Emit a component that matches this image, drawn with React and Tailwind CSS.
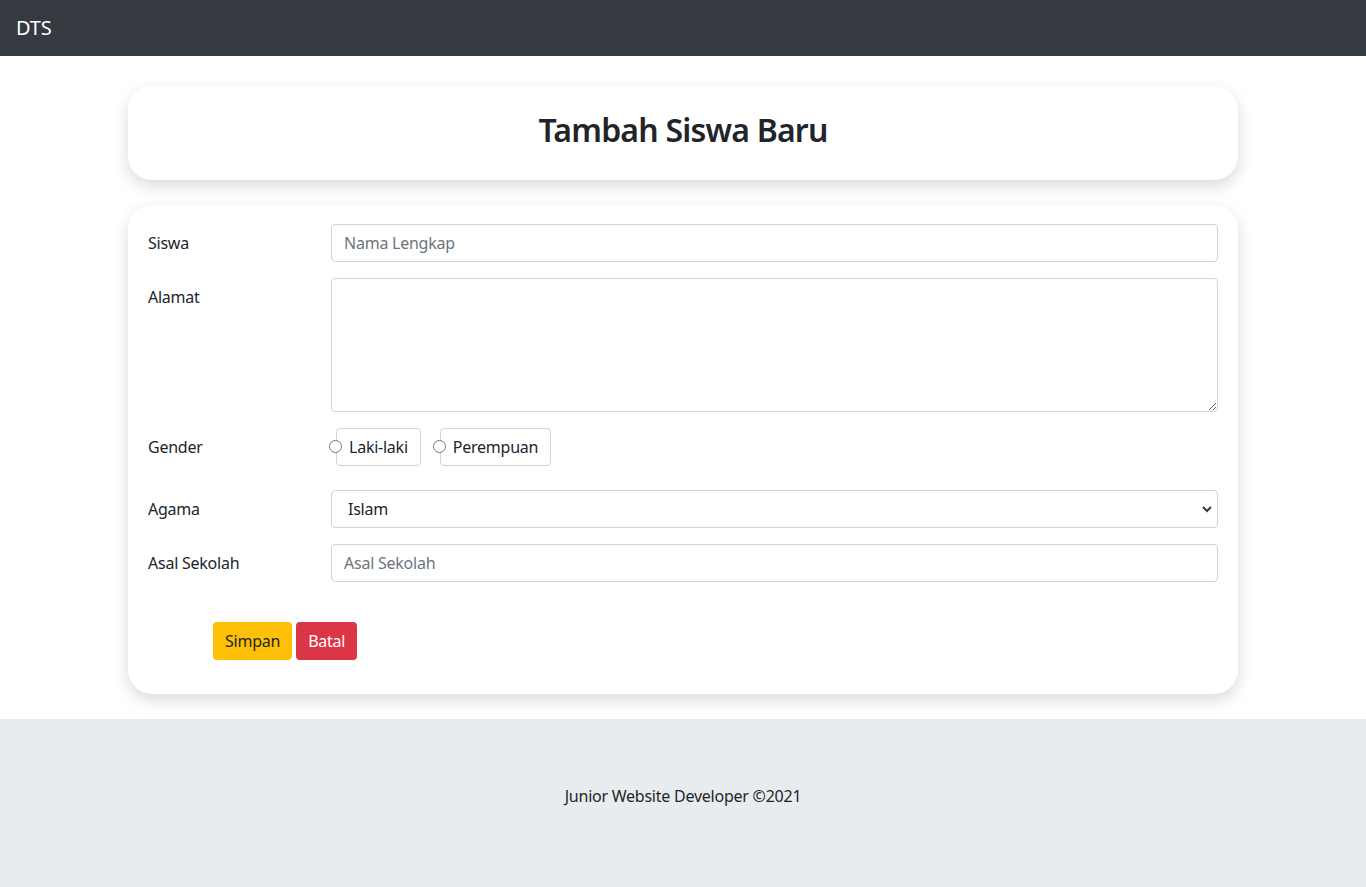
import React from 'react';

const inputCls =
    'w-full h-[38px] rounded-[4px] border border-[#ced4da] bg-white px-3 text-[16px] text-[#212529] placeholder:text-[#6c757d] outline-none';

const App = () => {
    return (
        <div className="min-h-screen flex flex-col bg-white text-[#212529] font-['Noto_Sans',sans-serif] text-[16px] tracking-[-0.015em]">
            {/* Navbar */}
            <nav className="h-14 bg-[#343a40] flex items-center px-4">
                <span className="text-white text-[20px]">DTS</span>
            </nav>

            <main className="w-[1110px] mx-auto pt-[30px] pb-[25px] flex flex-col gap-[25px]">
                {/* Header card */}
                <div className="h-[94px] rounded-[24px] bg-white shadow-[0_6px_16px_rgba(0,0,0,0.15)] flex items-center justify-center">
                    <h1 className="text-[32px] font-semibold leading-none tracking-[-0.025em] text-[#212529] -mt-[6px]">Tambah Siswa Baru</h1>
                </div>

                {/* Form card */}
                <form className="rounded-[24px] bg-white shadow-[0_6px_16px_rgba(0,0,0,0.15)] px-5 pt-[19px] pb-[34px]">
                    <div className="grid grid-cols-[183px_1fr] gap-y-4 items-start">
                        <label className="pt-[7px] leading-6">Siswa</label>
                        <input className={inputCls} placeholder="Nama Lengkap" />

                        <label className="pt-[7px] leading-6">Alamat</label>
                        <textarea className="w-full h-[134px] rounded-[4px] border border-[#ced4da] px-3 py-[6px] outline-none" />

                        <label className="pt-[7px] leading-6">Gender</label>
                        <div className="flex gap-3 mb-2 -ml-[2px]">
                            <label className="flex items-center">
                                <span className="w-[13px] h-[13px] rounded-full border border-[#767676] bg-white -mr-[6px] -mt-[2px] relative z-10" />
                                <span className="h-[38px] px-3 flex items-center rounded-[4px] border border-[#ced4da]">Laki-laki</span>
                            </label>
                            <label className="flex items-center">
                                <span className="w-[13px] h-[13px] rounded-full border border-[#767676] bg-white -mr-[6px] -mt-[2px] relative z-10" />
                                <span className="h-[38px] px-3 flex items-center rounded-[4px] border border-[#ced4da]">Perempuan</span>
                            </label>
                        </div>

                        <label className="pt-[7px] leading-6">Agama</label>
                        <div className="relative">
                            <select className={inputCls + ' appearance-none pl-4'} defaultValue="Islam">
                                <option>Islam</option>
                                <option>Kristen</option>
                                <option>Katolik</option>
                                <option>Hindu</option>
                                <option>Buddha</option>
                            </select>
                            <svg className="absolute right-[6px] top-[15px] w-[10px] h-[8px]" viewBox="0 0 10 8" fill="none">
                                <path d="M1 2l4 4 4-4" stroke="#343a40" strokeWidth="2" />
                            </svg>
                        </div>

                        <label className="pt-[7px] leading-6">Asal Sekolah</label>
                        <input className={inputCls} placeholder="Asal Sekolah" />
                    </div>

                    <div className="flex gap-1 pl-[65px] mt-10">
                        <button type="button" className="h-[38px] px-3 rounded-[4px] bg-[#ffc107] text-[#212529]">Simpan</button>
                        <button type="button" className="h-[38px] px-3 rounded-[4px] bg-[#dc3545] text-white">Batal</button>
                    </div>
                </form>
            </main>

            {/* Footer */}
            <footer className="h-[168px] bg-[#e9ecef] pt-[65px] text-center">
                <p className="leading-6">Junior Website Developer ©2021</p>
            </footer>
        </div>
    );
};

export default App;
